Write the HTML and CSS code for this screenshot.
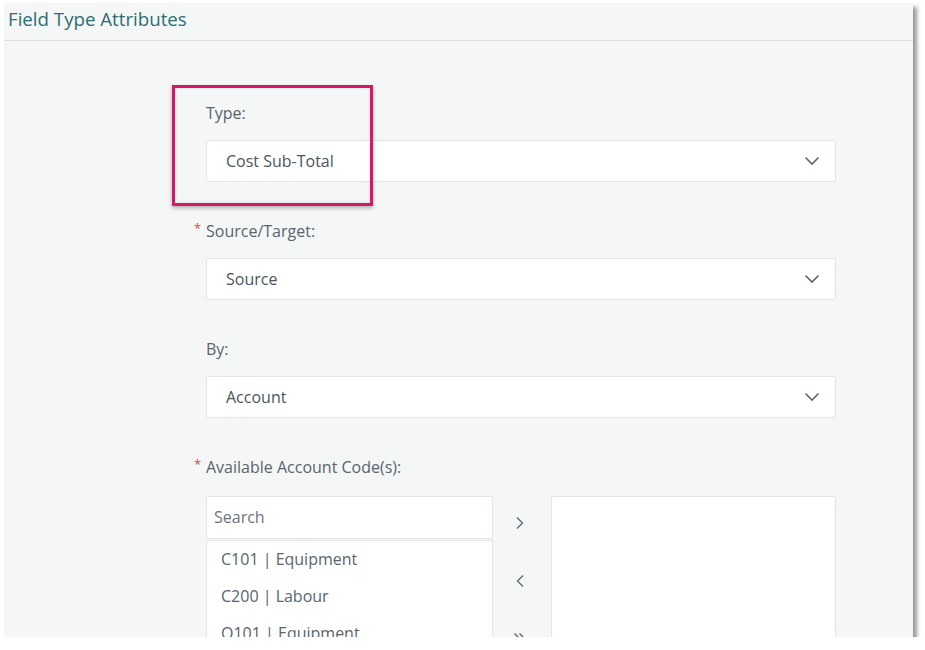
FILE: index.html
```html
<!DOCTYPE html>
<html lang="en">
<head>
  <meta charset="UTF-8">
  <title>Field Type Attributes</title>
  <link rel="stylesheet" href="styles.css">
</head>
<body>

  <div class="panel">
    <!-- HEADER -->
    <div class="panel-header">Field Type Attributes</div>

    <!-- highlight around the Type field -->
    <div class="highlight"></div>

    <div class="form">
      <div class="field">
        <label class="field-label">Type:</label>
        <div class="select">
          <span>Cost Sub-Total</span>
          <svg class="chev" width="16" height="10" viewBox="0 0 16 10"><path d="M1.5 1.5 L8 8 L14.5 1.5" fill="none" stroke="#5c6670" stroke-width="1.6"/></svg>
        </div>
      </div>

      <div class="field">
        <label class="field-label required">Source/Target:</label>
        <div class="select">
          <span>Source</span>
          <svg class="chev" width="16" height="10" viewBox="0 0 16 10"><path d="M1.5 1.5 L8 8 L14.5 1.5" fill="none" stroke="#5c6670" stroke-width="1.6"/></svg>
        </div>
      </div>

      <div class="field">
        <label class="field-label">By:</label>
        <div class="select">
          <span>Account</span>
          <svg class="chev" width="16" height="10" viewBox="0 0 16 10"><path d="M1.5 1.5 L8 8 L14.5 1.5" fill="none" stroke="#5c6670" stroke-width="1.6"/></svg>
        </div>
      </div>

      <div class="field">
        <label class="field-label required">Available Account Code(s):</label>
        <div class="dual-list">
          <div class="list-col">
            <div class="search">Search</div>
            <ul class="options">
              <li>C101 | Equipment</li>
              <li>C200 | Labour</li>
              <li>O101 | Equipment</li>
              <li>O200 | Labour</li>
            </ul>
          </div>

          <div class="mover">
            <svg width="10" height="14" viewBox="0 0 10 14"><path d="M2 1.5 L7.5 7 L2 12.5" fill="none" stroke="#66707a" stroke-width="1.5"/></svg>
            <svg width="10" height="14" viewBox="0 0 10 14"><path d="M8 1.5 L2.5 7 L8 12.5" fill="none" stroke="#66707a" stroke-width="1.5"/></svg>
            <svg width="14" height="14" viewBox="0 0 14 14"><path d="M1.5 1.5 L7 7 L1.5 12.5 M6.5 1.5 L12 7 L6.5 12.5" fill="none" stroke="#66707a" stroke-width="1.5"/></svg>
          </div>

          <div class="selected-box"></div>
        </div>
      </div>
    </div>
  </div>

</body>
</html>
```

FILE: styles.css
```css
/* ------------------------------
   BASIC STYLES
------------------------------ */
* {
  box-sizing: border-box;
  margin: 0;
  padding: 0;
}

body {
  font-family: "Open Sans", "Noto Sans", Arial, sans-serif;
  background-color: #fff;
  color: #4b5560;
  overflow: hidden;
}

/* ------------------------------
   PANEL
------------------------------ */
.panel {
  position: relative;
  margin: 3px 0 0 4px;
  width: 909px;
  height: 634px;
  background: #f5f7f6;
  box-shadow: 4px 4px 4px rgba(0, 0, 0, 0.4);
  overflow: hidden;
}

.panel-header {
  height: 38px;
  padding: 4px 0 0 4px;
  border-bottom: 1px solid #dde1e0;
  color: #2c6e72;
  font-size: 18.7px;
  line-height: 24px;
}

/* pink box drawn over the Type field */
.highlight {
  position: absolute;
  left: 168px;
  top: 82px;
  width: 201px;
  height: 121px;
  border: 3px solid #d8176a;
  box-shadow: 0 2px 4px rgba(0, 0, 0, 0.3), inset 0 0 3px rgba(0, 0, 0, 0.15);
  z-index: 5;
}

/* ------------------------------
   FORM
------------------------------ */
.form {
  margin-left: 202px;
  width: 630px;
  padding-top: 62px;
}

.field {
  margin-bottom: 39px;
}

.field-label {
  display: block;
  position: relative;
  font-size: 16px;
  line-height: 20px;
  color: #59646e;
  margin-bottom: 17px;
}

.field-label.required::before {
  content: "*";
  position: absolute;
  left: -12px;
  top: -3px;
  color: #e0463c;
  font-size: 13px;
}

.select {
  display: flex;
  align-items: center;
  justify-content: space-between;
  height: 42px;
  padding: 0 15px 0 19px;
  background: #fff;
  border: 1px solid #e2e5e6;
  border-radius: 2px;
  font-size: 16px;
  color: #4b5560;
}

/* ------------------------------
   DUAL LIST
------------------------------ */
.dual-list {
  display: grid;
  grid-template-columns: 287px 58px 285px;
  margin-top: 19px;
}

.search {
  height: 43px;
  padding: 0 7px;
  line-height: 41px;
  background: #fff;
  border: 1px solid #e2e5e6;
  border-radius: 2px;
  font-size: 16px;
  color: #6b747d;
}

.options {
  list-style: none;
  margin-top: 1px;
  height: 200px;
  padding-top: 6px;
  background: #fff;
  border: 1px solid #e2e5e6;
}

.options li {
  height: 37px;
  line-height: 24px;
  padding-left: 14px;
  font-size: 16px;
  color: #59646e;
}

.mover {
  display: flex;
  flex-direction: column;
  align-items: center;
  gap: 44px;
  padding-top: 20px;
  padding-right: 4px;
}

.selected-box {
  height: 200px;
  background: #fff;
  border: 1px solid #e2e5e6;
  border-radius: 2px;
}
```
